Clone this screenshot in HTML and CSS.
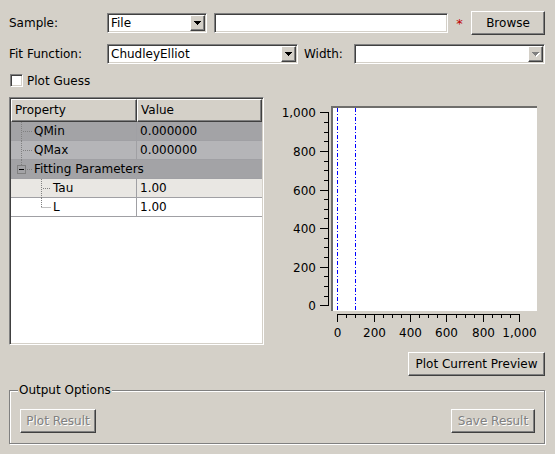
FILE: index.html
```html
<!DOCTYPE html>
<html>
<head>
<meta charset="utf-8">
<title>Fit</title>
<link rel="stylesheet" href="styles.css">
</head>
<body>
<div class="app">
  <div class="row row1">
    <span class="label">Sample:</span>
    <div class="combo sunken combo-file">
      <span class="combo-text">File</span>
      <span class="combo-btn raised"><svg class="arrow" width="7" height="4" viewBox="0 0 7 4"><path d="M0 0h7v1h-1v1h-1v1h-1v1h-1v-1h-1v-1h-1v-1h-1z"/></svg></span>
    </div>
    <div class="lineedit sunken"></div>
    <span class="required">*</span>
    <button class="btn raised btn-browse">Browse</button>
  </div>

  <div class="row row2">
    <span class="label">Fit Function:</span>
    <div class="combo sunken combo-fit">
      <span class="combo-text">ChudleyElliot</span>
      <span class="combo-btn raised"><svg class="arrow" width="7" height="4" viewBox="0 0 7 4"><path d="M0 0h7v1h-1v1h-1v1h-1v1h-1v-1h-1v-1h-1v-1h-1z"/></svg></span>
    </div>
    <span class="label-width">Width:</span>
    <div class="combo sunken combo-width">
      <span class="combo-text"></span>
      <span class="combo-btn raised"><svg class="arrow arrow-disabled" width="8" height="5" viewBox="0 0 8 5"><path class="arrow-hl" d="M1 1h7v1h-1v1h-1v1h-1v1h-1v-1h-1v-1h-1v-1h-1z"/><path class="arrow-sh" d="M0 0h7v1h-1v1h-1v1h-1v1h-1v-1h-1v-1h-1v-1h-1z"/></svg></span>
    </div>
  </div>

  <div class="row row3">
    <span class="checkbox sunken"></span>
    <span>Plot Guess</span>
  </div>

  <div class="main">
    <div class="tree sunken">
      <div class="header">
        <div class="hsec raised hsec-prop">Property</div>
        <div class="hsec raised hsec-val">Value</div>
      </div>

      <div class="trow dark">
        <div class="c1">
          <svg class="branch" width="23" height="19" viewBox="0 0 23 19"><path class="dots" d="M10.5 0V19M12 9.5H21"/></svg>
          <span>QMin</span>
        </div>
        <div class="c2">0.000000</div>
      </div>

      <div class="trow mid">
        <div class="c1">
          <svg class="branch" width="23" height="19" viewBox="0 0 23 19"><path class="dots" d="M10.5 0V19M12 9.5H21"/></svg>
          <span>QMax</span>
        </div>
        <div class="c2">0.000000</div>
      </div>

      <div class="trow dark">
        <div class="cspan">
          <svg class="branch" width="23" height="19" viewBox="0 0 23 19"><path class="dots" d="M10.5 0V5M16 9.5H21"/><rect class="box" x="6.5" y="5.5" width="8" height="8"/><path class="minus" d="M8 9.5H13"/></svg>
          <span>Fitting Parameters</span>
        </div>
      </div>

      <div class="trow light">
        <div class="c1">
          <svg class="branch" width="42" height="19" viewBox="0 0 42 19"><path class="dots" d="M30.5 0V19M32 9.5H40"/></svg>
          <span>Tau</span>
        </div>
        <div class="c2">1.00</div>
      </div>

      <div class="trow white">
        <div class="c1">
          <svg class="branch" width="42" height="19" viewBox="0 0 42 19"><path class="dots" d="M30.5 0V9M30.5 9.5H40"/></svg>
          <span>L</span>
        </div>
        <div class="c2">1.00</div>
      </div>
    </div>

    <div class="plotcol">
      <svg class="plot" width="281" height="248" viewBox="264 97 281 248">
        <rect x="331" y="106" width="206" height="205" fill="#ffffff"/>
        <rect x="331" y="106" width="206" height="2" fill="#6f6e6c"/>
        <rect x="331" y="106" width="2" height="205" fill="#6f6e6c"/>
        <path class="curve" d="M337.5 108V311M355.5 108V311"/>
        <path class="axis" d="M328.5 112V306"/>
        <path class="axis" d="M320 305.5H329M320 267.5H329M320 228.5H329M320 190.5H329M320 151.5H329M320 112.5H329"/>
        <path class="axis" d="M324 296.5H329M324 286.5H329M324 276.5H329M324 257.5H329M324 247.5H329M324 238.5H329M324 218.5H329M324 209.5H329M324 199.5H329M324 180.5H329M324 170.5H329M324 161.5H329M324 141.5H329M324 132.5H329M324 122.5H329"/>
        <g class="ylabels">
          <text x="316" y="310">0</text>
          <text x="316" y="272">200</text>
          <text x="316" y="233">400</text>
          <text x="316" y="195">600</text>
          <text x="316" y="156">800</text>
          <text x="316" y="117">1,000</text>
        </g>
        <path class="axis" d="M337 314.5H520"/>
        <path class="axis" d="M337.5 314V322M374.5 314V322M410.5 314V322M446.5 314V322M483.5 314V322M519.5 314V322"/>
        <path class="axis" d="M346.5 314V318M355.5 314V318M365.5 314V318M383.5 314V318M392.5 314V318M401.5 314V318M419.5 314V318M428.5 314V318M437.5 314V318M456.5 314V318M465.5 314V318M474.5 314V318M492.5 314V318M501.5 314V318M510.5 314V318"/>
        <g class="xlabels">
          <text x="337.5" y="337">0</text>
          <text x="374.5" y="337">200</text>
          <text x="410.5" y="337">400</text>
          <text x="446.5" y="337">600</text>
          <text x="483.5" y="337">800</text>
          <text x="519.5" y="337">1,000</text>
        </g>
      </svg>
      <button class="btn raised btn-preview">Plot Current Preview</button>
    </div>
  </div>

  <div class="group">
    <span class="group-title">Output Options</span>
    <button class="btn raised disabled btn-plot-result">Plot Result</button>
    <button class="btn raised disabled btn-save-result">Save Result</button>
  </div>
</div>
</body>
</html>
```

FILE: styles.css
```css
* {
  box-sizing: border-box;
}

html,
body {
  margin: 0;
  padding: 0;
}

body {
  width: 555px;
  height: 454px;
  overflow: hidden;
  background: #d4d0c8;
  font-family: "DejaVu Sans", "Liberation Sans", sans-serif;
  font-size: 12px;
  color: #000;
}

.app {
  padding: 11px 10px 0 9px;
}

/* bevels */
.sunken {
  border: 1px solid;
  border-color: #808080 #ffffff #ffffff #808080;
  box-shadow: inset 1px 1px 0 #404040, inset -1px -1px 0 #d4d0c8;
  background: #ffffff;
}

.raised {
  border: 1px solid;
  border-color: #ffffff #404040 #404040 #ffffff;
  box-shadow: inset -1px -1px 0 #808080;
  background: #d4d0c8;
}

.row {
  display: flex;
  align-items: center;
}

.row1 {
  height: 24px;
}

.row2 {
  height: 20px;
  margin-top: 9px;
}

.row3 {
  height: 13px;
  margin-top: 10px;
}

.label {
  width: 98px;
  flex-shrink: 0;
}

/* combo boxes */
.combo {
  display: flex;
  align-items: center;
  height: 20px;
  padding: 1px;
  flex-shrink: 0;
}

.combo-text {
  flex: 1;
  padding-left: 2px;
  line-height: 16px;
  white-space: nowrap;
  overflow: hidden;
}

.combo-btn {
  width: 15px;
  height: 16px;
  display: flex;
  align-items: center;
  justify-content: center;
  flex-shrink: 0;
}

.arrow {
  display: block;
  fill: #000;
}

.arrow-disabled .arrow-hl {
  fill: #ffffff;
}

.arrow-disabled .arrow-sh {
  fill: #808080;
}

.combo-file {
  width: 100px;
}

.combo-fit {
  width: 191px;
}

.combo-width {
  width: 191px;
}

.label-width {
  width: 50px;
  margin-left: 6px;
  flex-shrink: 0;
}

.lineedit {
  width: 234px;
  height: 20px;
  margin-left: 7px;
}

.required {
  width: 23px;
  text-align: center;
  color: #c00000;
  font-size: 13px;
}

/* buttons */
.btn {
  font-family: inherit;
  font-size: 12px;
  color: #000;
  margin: 0;
  padding: 0;
  height: 24px;
  text-align: center;
  white-space: nowrap;
}

.btn-browse {
  width: 74px;
}

.btn.disabled {
  color: #808080;
  text-shadow: 1px 1px 0 #ffffff;
}

/* checkbox */
.checkbox {
  width: 13px;
  height: 13px;
  margin-left: 1px;
  margin-right: 4px;
}

/* main area */
.main {
  display: flex;
  align-items: flex-start;
  margin-top: 10px;
}

.tree {
  width: 255px;
  height: 248px;
  padding: 1px;
  flex-shrink: 0;
}

.header {
  display: flex;
  height: 23px;
}

.hsec {
  line-height: 21px;
  padding-left: 3px;
}

.hsec-prop {
  width: 126px;
}

.hsec-val {
  flex: 1;
}

.trow {
  display: flex;
  height: 19px;
  box-shadow: inset 0 -1px 0 #a0a0a4;
  line-height: 18px;
}

.trow.dark {
  background: #a3a3a6;
}

.trow.mid {
  background: #b5b5b8;
}

.trow.light {
  background: #e9e7e3;
}

.trow.white {
  background: #ffffff;
}

.c1 {
  width: 126px;
  display: flex;
  align-items: flex-start;
  box-shadow: inset -1px 0 0 #a0a0a4;
  flex-shrink: 0;
}

.cspan {
  flex: 1;
  display: flex;
  align-items: flex-start;
}

.c2 {
  flex: 1;
  padding-left: 3px;
}

.branch {
  display: block;
  flex-shrink: 0;
}

.branch .dots {
  fill: none;
  stroke: #808080;
  stroke-width: 1;
  stroke-dasharray: 1 1;
}

.branch .box {
  fill: none;
  stroke: #808080;
  stroke-width: 1;
}

.branch .minus {
  stroke: #000;
  stroke-width: 1;
}

/* plot */
.plotcol {
  width: 281px;
  display: flex;
  flex-direction: column;
  align-items: flex-end;
}

.plot {
  display: block;
}

.plot .axis {
  fill: none;
  stroke: #000;
  stroke-width: 1;
}

.plot .curve {
  fill: none;
  stroke: #0000ff;
  stroke-width: 1;
  stroke-dasharray: 4 2 1 2;
}

.plot text {
  font-family: "DejaVu Sans", sans-serif;
  font-size: 12px;
  fill: #000;
}

.ylabels text {
  text-anchor: end;
}

.xlabels text {
  text-anchor: middle;
}

.btn-preview {
  width: 137px;
  margin-top: 7px;
}

/* group box */
.group {
  position: relative;
  width: 536px;
  height: 54px;
  margin-top: 14px;
  border: 1px solid #808080;
  box-shadow: inset 1px 1px 0 #ffffff, 1px 1px 0 #ffffff;
  display: flex;
  justify-content: space-between;
  align-items: flex-start;
  padding: 18px 9px 0 10px;
}

.group-title {
  position: absolute;
  top: -8px;
  left: 8px;
  padding: 0 1px;
  line-height: 14px;
  background: #d4d0c8;
}

.btn-plot-result {
  width: 76px;
}

.btn-save-result {
  width: 84px;
}
```
